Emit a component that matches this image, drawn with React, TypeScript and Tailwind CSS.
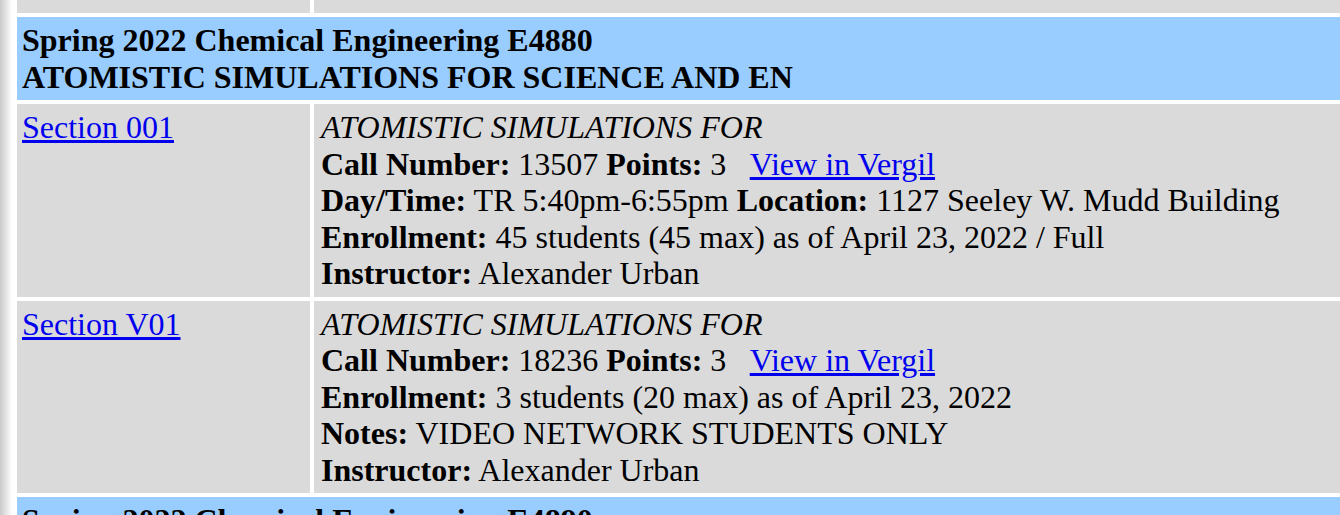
const serif = { fontFamily: '"Liberation Serif", "Times New Roman", serif' }

type Section = {
  name: string
  title: string
  lines: { label: string; value: string; extra?: { label: string; value: string } }[]
  call: string
  points: string
}

const sections: Section[] = [
  {
    name: 'Section 001',
    title: 'ATOMISTIC SIMULATIONS FOR',
    call: '13507',
    points: '3',
    lines: [
      {
        label: 'Day/Time:',
        value: 'TR 5:40pm-6:55pm',
        extra: { label: 'Location:', value: '1127 Seeley W. Mudd Building' },
      },
      { label: 'Enrollment:', value: '45 students (45 max) as of April 23, 2022 / Full' },
      { label: 'Instructor:', value: 'Alexander Urban' },
    ],
  },
  {
    name: 'Section V01',
    title: 'ATOMISTIC SIMULATIONS FOR',
    call: '18236',
    points: '3',
    lines: [
      { label: 'Enrollment:', value: '3 students (20 max) as of April 23, 2022' },
      { label: 'Notes:', value: 'VIDEO NETWORK STUDENTS ONLY' },
      { label: 'Instructor:', value: 'Alexander Urban' },
    ],
  },
]

function Header({ course, title }: { course: string; title: string }) {
  return (
    <div className="col-span-2 bg-[#99ccff] p-[5px] font-bold">
      <div>{course}</div>
      <div>{title}</div>
    </div>
  )
}

export default function App() {
  return (
    <div className="flex h-[515px] w-[1340px] overflow-hidden bg-white text-[32px] leading-[36.5px] text-black" style={serif}>
      <div className="w-[12px] shrink-0 bg-gradient-to-r from-[#c9c9c9] to-white" />
      <div className="w-[5px] shrink-0" />
      <div className="grid w-[1420px] shrink-0 grid-cols-[293px_1fr] content-start gap-[4px]">
        <div className="h-[13px] bg-[#dadada]" />
        <div className="h-[13px] bg-[#dadada]" />
        <Header course="Spring 2022 Chemical Engineering E4880" title="ATOMISTIC SIMULATIONS FOR SCIENCE AND EN" />
        {sections.map((s) => (
          <div key={s.name} className="contents">
            <div className="bg-[#dadada] p-[5px]">
              <a href="#" className="text-[#0000ee] underline">
                {s.name}
              </a>
            </div>
            <div className="bg-[#dadada] py-[5px] pl-[7px] pr-[5px] whitespace-nowrap">
              <div className="italic">{s.title}</div>
              <div>
                <b>Call Number:</b> {s.call} <b>Points:</b> {s.points}
                {'\u00a0\u00a0 '}
                <a href="#" className="text-[#0000ee] underline">
                  View in Vergil
                </a>
              </div>
              {s.lines.map((l) => (
                <div key={l.label}>
                  <b>{l.label}</b> {l.value}
                  {l.extra && (
                    <>
                      {' '}
                      <b>{l.extra.label}</b> {l.extra.value}
                    </>
                  )}
                </div>
              ))}
            </div>
          </div>
        ))}
        <Header course="Spring 2022 Chemical Engineering E4890" title="ATOMISTIC SIMULATIONS FOR SCIENCE AND EN" />
      </div>
    </div>
  )
}
